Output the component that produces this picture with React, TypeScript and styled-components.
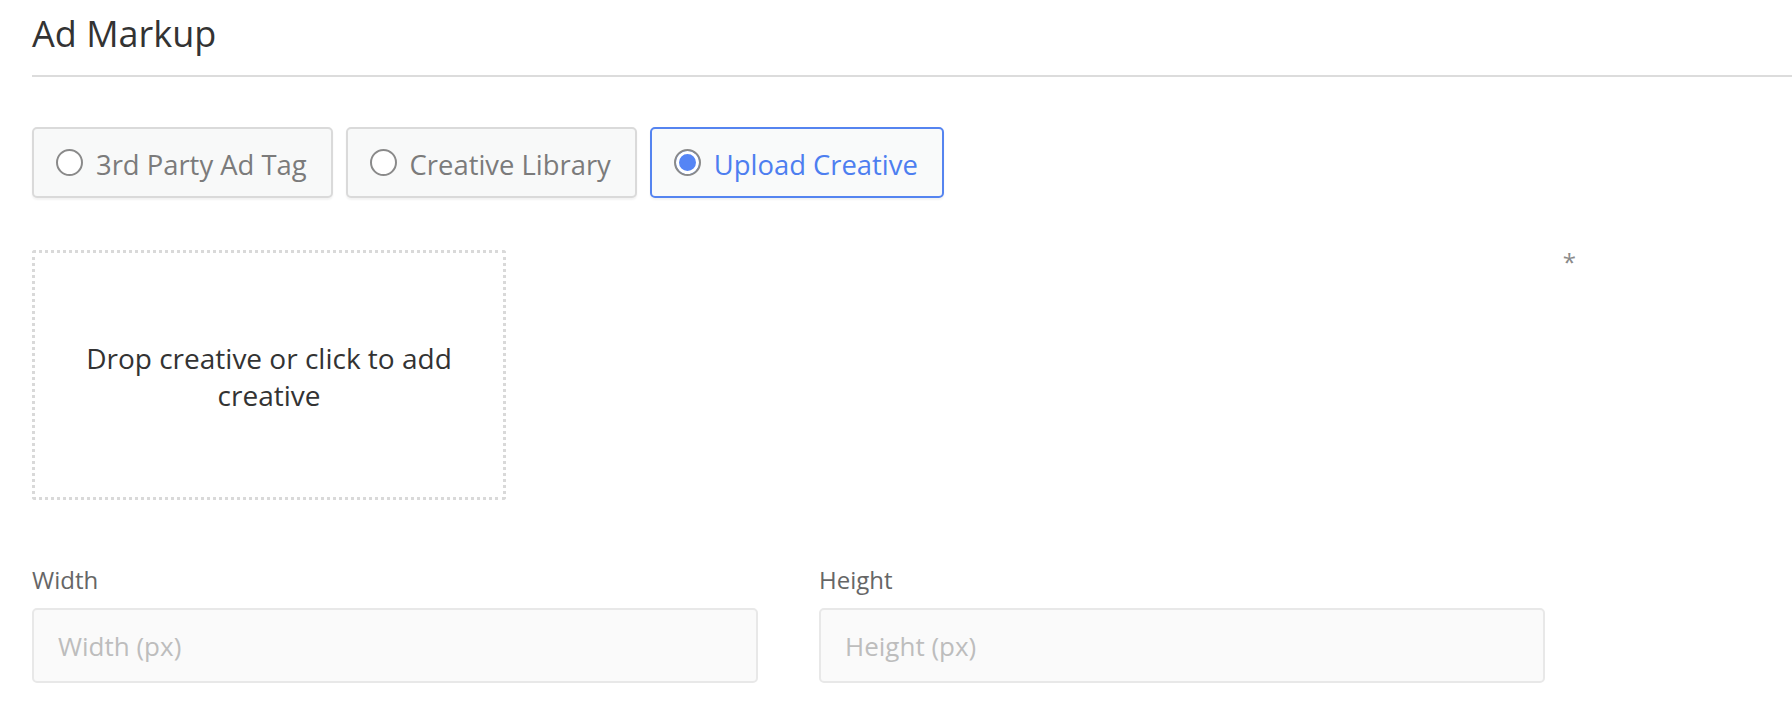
import { useState } from 'react';
import styled, { createGlobalStyle } from 'styled-components';

const GlobalStyle = createGlobalStyle`
  body {
    margin: 0;
    background: #ffffff;
    font-family: 'Open Sans', 'Noto Sans', sans-serif;
    color: #333333;
  }
`;

const Page = styled.div`
  padding: 10px 0 0 32px;
`;

const Title = styled.h2`
  margin: 0;
  font-size: 36px;
  font-weight: 400;
  line-height: 48px;
  color: #333333;
`;

const Divider = styled.hr`
  margin: 17px 0 0;
  border: none;
  border-top: 2px solid #dcdcdc;
`;

const SourceRow = styled.div`
  display: flex;
  gap: 13px;
  margin-top: 50px;
`;

const SourceButton = styled.button<{ $active: boolean }>`
  display: flex;
  align-items: center;
  gap: 13px;
  height: 71px;
  padding: 4px 24px 0 22px;
  border: 2px solid ${(p) => (p.$active ? '#5584f0' : '#dadada')};
  border-radius: 5px;
  background: ${(p) => (p.$active ? '#f9fafa' : '#f8f9f9')};
  box-shadow: 0 2px 2px rgba(0, 0, 0, 0.05);
  font-family: inherit;
  font-size: 27.4px;
  color: ${(p) => (p.$active ? '#4d7ef0' : '#7b7b7b')};
  cursor: pointer;
`;

const RadioDot = styled.span<{ $checked: boolean }>`
  box-sizing: border-box;
  width: 27px;
  height: 27px;
  border-radius: 50%;
  border: 2px solid #8a8a8a;
  background: ${(p) => (p.$checked ? '#5585f5' : '#ffffff')};
  box-shadow: ${(p) => (p.$checked ? 'inset 0 0 0 3px #ffffff' : 'none')};
  flex-shrink: 0;
  margin-top: -4px;
`;

const UploadRow = styled.div`
  display: flex;
  align-items: flex-start;
  justify-content: space-between;
  width: 1544px;
  margin-top: 52px;
`;

const DropZone = styled.div`
  box-sizing: border-box;
  width: 474px;
  height: 250px;
  border: 3px dotted #d9d9d9;
  border-radius: 3px;
  display: flex;
  align-items: center;
  justify-content: center;
  padding: 4px 40px 0;
  text-align: center;
  font-size: 28px;
  line-height: 37.5px;
  color: #333333;
  cursor: pointer;
`;

const Required = styled.span`
  margin-top: -5px;
  font-size: 24px;
  color: #8a8a8a;
`;

const SizeGrid = styled.div`
  display: grid;
  grid-template-columns: 726px 726px;
  column-gap: 61px;
  margin-top: 63px;
`;

const Field = styled.div`
  display: flex;
  flex-direction: column;
  gap: 12px;
`;

const Label = styled.label`
  font-size: 24px;
  line-height: 33px;
  color: #666666;
`;

const TextInput = styled.input`
  box-sizing: border-box;
  height: 75px;
  padding: 0 24px;
  border: 2px solid #e8e8e8;
  border-radius: 5px;
  background: #fafafa;
  font-family: inherit;
  font-size: 26px;
  color: #333333;
  outline: none;

  &::placeholder {
    color: #bdbdbd;
  }
`;

const sources = ['3rd Party Ad Tag', 'Creative Library', 'Upload Creative'];

export default function App() {
  const [source, setSource] = useState('Upload Creative');

  return (
    <Page>
      <GlobalStyle />
      <Title>Ad Markup</Title>
      <Divider />
      <SourceRow>
        {sources.map((s) => (
          <SourceButton key={s} $active={s === source} onClick={() => setSource(s)}>
            <RadioDot $checked={s === source} />
            {s}
          </SourceButton>
        ))}
      </SourceRow>
      <UploadRow>
        <DropZone>Drop creative or click to add creative</DropZone>
        <Required>*</Required>
      </UploadRow>
      <SizeGrid>
        <Field>
          <Label>Width</Label>
          <TextInput placeholder="Width (px)" />
        </Field>
        <Field>
          <Label>Height</Label>
          <TextInput placeholder="Height (px)" />
        </Field>
      </SizeGrid>
    </Page>
  );
}
